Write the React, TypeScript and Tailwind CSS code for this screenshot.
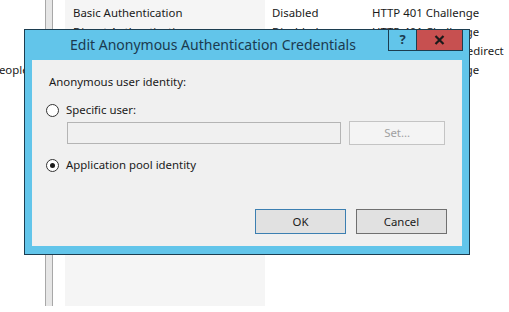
import { useState } from "react";

const ROWS = [
  ["Basic Authentication", "Disabled", "HTTP 401 Challenge"],
  ["Digest Authentication", "Disabled", "HTTP 401 Challenge"],
  ["Forms Authentication", "Disabled", "HTTP 302 Login/Redirect"],
  ["Windows Authentication", "Disabled", "HTTP 401 Challenge"],
];

function Radio({ checked }: { checked: boolean }) {
  return (
    <span className="w-[13px] h-[13px] rounded-full border border-[#333] bg-white flex items-center justify-center shrink-0">
      {checked && <span className="w-[5px] h-[5px] rounded-full bg-[#1a1a1a]" />}
    </span>
  );
}

export default function App() {
  const [usePool, setUsePool] = useState(true);

  return (
    <div
      className="relative w-[509px] h-[312px] bg-white overflow-hidden text-[11.4px] text-[#1a1a1a]"
      style={{ fontFamily: '"Noto Sans", "Open Sans", sans-serif' }}
    >
      {/* page behind the dialog */}
      <div className="flex h-[306px]">
        <div className="w-[45px] overflow-hidden flex flex-col pt-[3px]">
          <div className="h-[57px]" />
          <div className="h-[19px] leading-[19px] whitespace-nowrap ml-[-8px]">People</div>
        </div>
        <div className="w-[8px] bg-[#e6e6e6] border-x border-[#a8a8a8]" />
        <div className="w-[12px]" />
        <div className="flex-1 relative">
          <div className="absolute left-0 top-0 bottom-0 w-[200px] bg-[#f5f5f5]" />
          <div className="relative flex flex-col pt-[3px]">
            {ROWS.map((r) => (
              <div key={r[0]} className="flex h-[19px] leading-[19px] whitespace-nowrap">
                <span className="w-[207px] pl-[8px]">{r[0]}</span>
                <span className="w-[100px]">{r[1]}</span>
                <span>{r[2]}</span>
              </div>
            ))}
          </div>
        </div>
      </div>

      {/* dialog window */}
      <div className="absolute left-[24px] top-[29px] w-[446px] h-[226px] bg-[#62c5ea] border border-[#1c3d50] flex flex-col">
        <div className="h-[30px] relative">
          <div className="pl-[45px] text-[14px] text-[#1b3a4f] leading-[30px] whitespace-nowrap">
            Edit Anonymous Authentication Credentials
          </div>
          <div className="absolute right-[6px] top-[-1px] flex">
            <div className="w-[29px] h-[22px] border border-[#1c3d50] flex items-center justify-center text-[13px] font-bold text-[#1b3a4f]">
              ?
            </div>
            <div className="w-[46px] h-[22px] bg-[#c75050] border border-[#1c3d50] border-l-0 flex items-center justify-center">
              <svg width="11" height="10" viewBox="0 0 11 10">
                <path d="M1.5 1 L9.5 9 M9.5 1 L1.5 9" stroke="#1a1a1a" strokeWidth="2.2" />
              </svg>
            </div>
          </div>
        </div>

        <div className="mx-[7px] mb-[8px] flex-1 bg-[#f0f0f0] relative px-[17px] pt-[13px]">
          <div className="h-[18px] leading-[18px]">Anonymous user identity:</div>

          <label className="mt-[10px] flex items-center gap-[7px] h-[18px] ml-[-3px]" onClick={() => setUsePool(false)}>
            <Radio checked={!usePool} />
            <span>Specific user:</span>
          </label>

          <div className="mt-[2px] flex items-center ml-[18px]">
            <div className="w-[275px] h-[22px] bg-[#f0f0f0] border border-[#b4b4b4]" />
            <div className="ml-[8px] w-[96px] h-[24px] border border-[#c4c4c4] bg-[#f4f4f4] flex items-center justify-center text-[#a0a0a0]">
              Set...
            </div>
          </div>

          <label className="mt-[11px] flex items-center gap-[7px] h-[18px] ml-[-3px]" onClick={() => setUsePool(true)}>
            <Radio checked={usePool} />
            <span>Application pool identity</span>
          </label>

          <div className="absolute right-[15px] bottom-[12px] flex gap-[10px]">
            <button className="w-[91px] h-[25px] bg-[#e1e1e1] border border-[#3c7fb1]">OK</button>
            <button className="w-[91px] h-[25px] bg-[#e1e1e1] border border-[#707070]">Cancel</button>
          </div>
        </div>
      </div>
    </div>
  );
}
